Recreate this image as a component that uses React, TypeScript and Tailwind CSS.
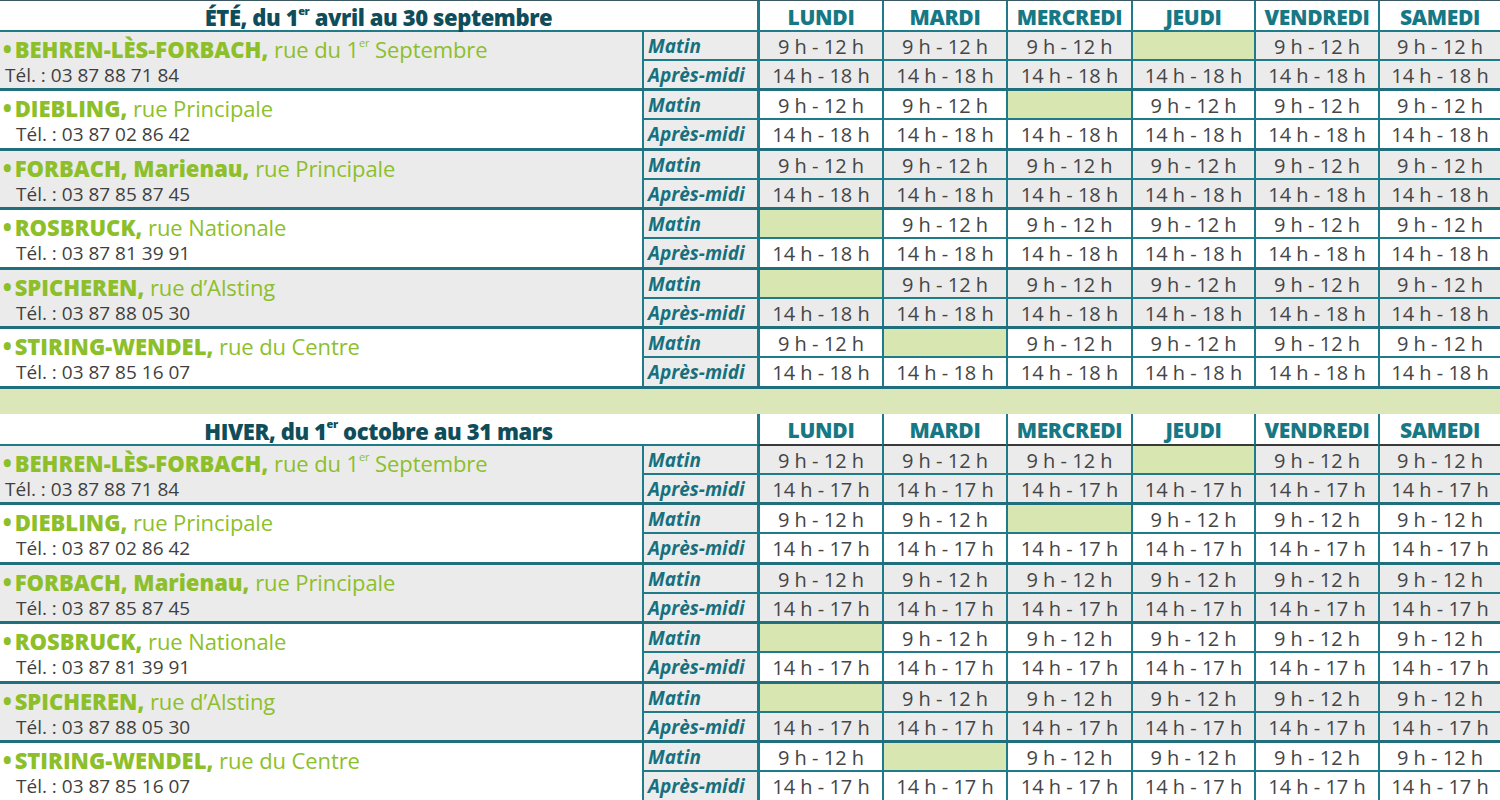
import React from "react";

type Loc = {
  name: string;
  street: React.ReactNode;
  tel: string;
  closed: number;
  telIndent: boolean;
};

const sup = (t: string) => (
  <sup className="text-[11px] relative top-[-3px] align-super leading-none">{t}</sup>
);

const locs: Loc[] = [
  {
    name: "BEHREN-LÈS-FORBACH,",
    street: (
      <>
        rue du 1{sup("er")} Septembre
      </>
    ),
    tel: "03 87 88 71 84",
    closed: 3,
    telIndent: false,
  },
  { name: "DIEBLING,", street: "rue Principale", tel: "03 87 02 86 42", closed: 2, telIndent: true },
  { name: "FORBACH, Marienau,", street: "rue Principale", tel: "03 87 85 87 45", closed: -1, telIndent: true },
  { name: "ROSBRUCK,", street: "rue Nationale", tel: "03 87 81 39 91", closed: 0, telIndent: true },
  { name: "SPICHEREN,", street: "rue d’Alsting", tel: "03 87 88 05 30", closed: 0, telIndent: true },
  { name: "STIRING-WENDEL,", street: "rue du Centre", tel: "03 87 85 16 07", closed: 1, telIndent: true },
];

const days = ["LUNDI", "MARDI", "MERCREDI", "JEUDI", "VENDREDI", "SAMEDI"];

const GRID =
  "grid grid-cols-[642px_115px_125px_124px_125px_123px_124px_122px]";

const dayBorder = (i: number) =>
  i === 0 ? "border-l-[3px] border-[#1f7b88]" : "border-l-2 border-[#1f7b88]";

function Header({ title, winter }: { title: React.ReactNode; winter: boolean }) {
  return (
    <div className={`${GRID} h-[32px] bg-white ${winter ? "" : "border-t border-[#3c5862]"}`}>
      <div className="col-span-2 flex items-center justify-center border-b-2 border-[#1f7b88] text-[22px] font-extrabold text-[#0f4d5a] tracking-[-0.4px] leading-none pt-[3px]">
        {title}
      </div>
      {days.map((d, i) => (
        <div
          key={d}
          className={`${dayBorder(i)} flex items-center justify-center border-b-2 ${
            winter ? "border-b-[#3a3a3a]" : "border-b-[#1f7b88]"
          } text-[21px] font-extrabold text-[#177885] leading-none pt-[3px] tracking-[-0.3px]`}
        >
          {d}
        </div>
      ))}
    </div>
  );
}

function LocBlock({ loc, idx, end }: { loc: Loc; idx: number; end: string }) {
  const gray = idx % 2 === 0;
  const rowBg = gray ? "bg-[#ebebeb]" : "bg-white";
  const rows = idx % 2 === 0 ? "grid-rows-[29px_27px]" : "grid-rows-[29px_28px]";
  return (
    <div className={`${GRID} ${rows} border-b-[3px] border-[#1f6f7c]`}>
      <div className={`row-span-2 ${rowBg} flex flex-col pl-[3px] pt-[4px]`}>
        <div className="text-[22px] leading-[27px] text-[#8dbf2a] whitespace-nowrap">
          <span className="font-extrabold mr-[3px]">•</span>
          <span className="font-extrabold tracking-[0px]">{loc.name}</span>{" "}
          <span className="tracking-[-0.1px]">{loc.street}</span>
        </div>
        <div
          className={`text-[19px] leading-[25px] text-[#3f3f3f] whitespace-nowrap ${
            loc.telIndent ? "pl-[13px]" : "pl-[2px]"
          }`}
        >
          Tél. : {loc.tel}
        </div>
      </div>
      {/* Matin row */}
      <div className="border-l-2 border-b-2 border-[#1f7b88] bg-[#ececec] flex items-center pl-[4px] pt-[1px] text-[19px] font-bold italic text-[#17707e] leading-none">
        Matin
      </div>
      {days.map((d, i) => {
        const closed = loc.closed === i;
        return (
          <div
            key={"m" + d}
            className={`${dayBorder(i)} border-b-2 border-b-[#1f7b88] ${
              closed ? "bg-[#d8e6b2]" : rowBg
            } flex items-center justify-center pt-[2px] text-[20px] text-[#454545] leading-none`}
          >
            {closed ? "" : "9 h - 12 h"}
          </div>
        );
      })}
      {/* Apres-midi row */}
      <div className="border-l-2 border-[#1f7b88] bg-[#ececec] flex items-center pl-[4px] pt-[1px] text-[19px] font-bold italic text-[#17707e] leading-none">
        Après-midi
      </div>
      {days.map((d, i) => (
        <div
          key={"a" + d}
          className={`${dayBorder(i)} ${rowBg} flex items-center justify-center pt-[2px] text-[20px] text-[#454545] leading-none`}
        >
          {`14 h - ${end} h`}
        </div>
      ))}
    </div>
  );
}

export default function App() {
  return (
    <div
      className="w-[1500px] h-[800px] overflow-hidden bg-white"
      style={{ fontFamily: '"Open Sans", "Noto Sans", sans-serif' }}
    >
      <Header
        winter={false}
        title={
          <span>
            ÉTÉ, du 1{sup("er")} avril au 30 septembre
          </span>
        }
      />
      {locs.map((l, i) => (
        <LocBlock key={"e" + i} loc={l} idx={i} end="18" />
      ))}
      <div className="h-[25px] bg-[#dbe7b8]" />
      <Header
        winter={true}
        title={
          <span>
            HIVER, du 1{sup("er")} octobre au 31 mars
          </span>
        }
      />
      {locs.map((l, i) => (
        <LocBlock key={"h" + i} loc={l} idx={i} end="17" />
      ))}
    </div>
  );
}
